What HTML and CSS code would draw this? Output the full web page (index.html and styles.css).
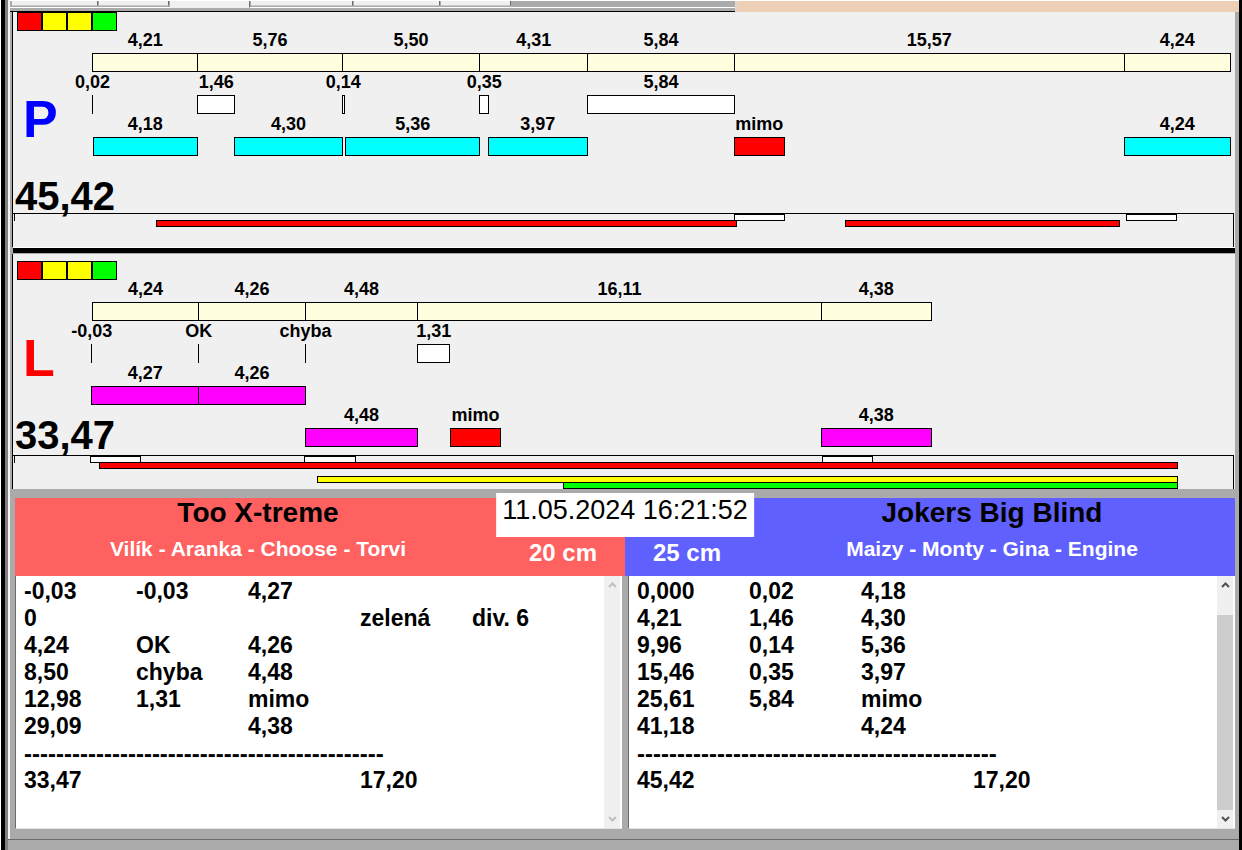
FILE: index.html
```html
<!doctype html>
<html lang="cs">
  <head>
    <meta charset="UTF-8" />
    <meta name="viewport" content="width=device-width, initial-scale=1.0" />
    <title>Too X-treme - Jokers Big Blind</title>
    <link rel="stylesheet" href="styles.css">
  </head>
  <body>
    <div class="window">
      <div class="client">
        <div class="topbar">
          <div class="tabs">
            <button class="tab tab-l" aria-label="1"></button>
            <button class="tab tab-s" aria-label="2"></button>
            <button class="tab tab-m active" aria-label="3"></button>
            <button class="tab tab-xl" aria-label="4"></button>
            <button class="tab tab-l" aria-label="5"></button>
            <button class="tab tab-s" aria-label="6"></button>
          </div>
          <div class="topbar-rest"></div>
        </div>

        <section class="panel panel-right">
          <div class="lights">
            <span class="light red"></span>
            <span class="light yellow"></span>
            <span class="light yellow"></span>
            <span class="light green"></span>
          </div>
          <div class="panel-body">
            <div class="side">
              <div class="letter blue-text">P</div>
              <div class="total">45,42</div>
            </div>
            <div class="chart">
              <div class="lane">
                <div class="run" style="--at: 0; --len: 4.21"><span>4,21</span><i class="bar cream"></i></div>
                <div class="run" style="--at: 4.21; --len: 5.76"><span>5,76</span><i class="bar cream"></i></div>
                <div class="run" style="--at: 9.96; --len: 5.5"><span>5,50</span><i class="bar cream"></i></div>
                <div class="run" style="--at: 15.46; --len: 4.31"><span>4,31</span><i class="bar cream"></i></div>
                <div class="run" style="--at: 19.77; --len: 5.84"><span>5,84</span><i class="bar cream"></i></div>
                <div class="run" style="--at: 25.61; --len: 15.57"><span>15,57</span><i class="bar cream"></i></div>
                <div class="run" style="--at: 41.18; --len: 4.24"><span>4,24</span><i class="bar cream"></i></div>
              </div>
              <div class="lane">
                <div class="run" style="--at: 0; --len: 0"><span>0,02</span><i class="bar line"></i></div>
                <div class="run" style="--at: 4.21; --len: 1.46"><span>1,46</span><i class="bar white"></i></div>
                <div class="run" style="--at: 9.96; --len: 0.1"><span>0,14</span><i class="bar white"></i></div>
                <div class="run" style="--at: 15.46; --len: 0.35"><span>0,35</span><i class="bar white"></i></div>
                <div class="run" style="--at: 19.77; --len: 5.84"><span>5,84</span><i class="bar white"></i></div>
              </div>
              <div class="lane">
                <div class="run" style="--at: 0.02; --len: 4.18"><span>4,18</span><i class="bar cyan"></i></div>
                <div class="run" style="--at: 5.67; --len: 4.3"><span>4,30</span><i class="bar cyan"></i></div>
                <div class="run" style="--at: 10.1; --len: 5.36"><span>5,36</span><i class="bar cyan"></i></div>
                <div class="run" style="--at: 15.81; --len: 3.93"><span>3,97</span><i class="bar cyan"></i></div>
                <div class="run" style="--at: 25.61; --len: 2"><span>mimo</span><i class="bar red"></i></div>
                <div class="run" style="--at: 41.18; --len: 4.24"><span>4,24</span><i class="bar cyan"></i></div>
              </div>
              <div class="lane"></div>
            </div>
          </div>
          <div class="sensors">
            <div class="sensor">
              <i class="mark white" style="--at: 25.61; --len: 2"></i>
              <i class="mark white" style="--at: 41.27; --len: 2"></i>
            </div>
            <div class="sensor">
              <i class="mark red" style="--at: 2.55; --len: 23.15"></i>
              <i class="mark red" style="--at: 30.05; --len: 10.94"></i>
            </div>
          </div>
        </section>

        <div class="divider"></div>

        <section class="panel panel-left">
          <div class="lights">
            <span class="light red"></span>
            <span class="light yellow"></span>
            <span class="light yellow"></span>
            <span class="light green"></span>
          </div>
          <div class="panel-body">
            <div class="side">
              <div class="letter red-text">L</div>
              <div class="total">33,47</div>
            </div>
            <div class="chart">
              <div class="lane">
                <div class="run" style="--at: 0; --len: 4.24"><span>4,24</span><i class="bar cream"></i></div>
                <div class="run" style="--at: 4.24; --len: 4.26"><span>4,26</span><i class="bar cream"></i></div>
                <div class="run" style="--at: 8.5; --len: 4.48"><span>4,48</span><i class="bar cream"></i></div>
                <div class="run" style="--at: 12.98; --len: 16.11"><span>16,11</span><i class="bar cream"></i></div>
                <div class="run" style="--at: 29.09; --len: 4.38"><span>4,38</span><i class="bar cream"></i></div>
              </div>
              <div class="lane">
                <div class="run" style="--at: -0.03; --len: 0"><span>-0,03</span><i class="bar line"></i></div>
                <div class="run" style="--at: 4.24; --len: 0"><span>OK</span><i class="bar line"></i></div>
                <div class="run" style="--at: 8.5; --len: 0"><span>chyba</span><i class="bar line"></i></div>
                <div class="run" style="--at: 12.98; --len: 1.28"><span>1,31</span><i class="bar white"></i></div>
              </div>
              <div class="lane">
                <div class="run" style="--at: -0.03; --len: 4.27"><span>4,27</span><i class="bar magenta"></i></div>
                <div class="run" style="--at: 4.24; --len: 4.26"><span>4,26</span><i class="bar magenta"></i></div>
              </div>
              <div class="lane">
                <div class="run" style="--at: 8.5; --len: 4.48"><span>4,48</span><i class="bar magenta"></i></div>
                <div class="run" style="--at: 14.29; --len: 2"><span>mimo</span><i class="bar red"></i></div>
                <div class="run" style="--at: 29.09; --len: 4.38"><span>4,38</span><i class="bar magenta"></i></div>
              </div>
            </div>
          </div>
          <div class="sensors">
            <div class="sensor">
              <i class="mark white" style="--at: -0.1; --len: 2"></i>
              <i class="mark white" style="--at: 8.48; --len: 2"></i>
              <i class="mark white" style="--at: 29.14; --len: 2"></i>
            </div>
            <div class="sensor">
              <i class="mark red" style="--at: 0.28; --len: 43.04"></i>
            </div>
            <div class="sensor"></div>
            <div class="sensor">
              <i class="mark yellow" style="--at: 8.98; --len: 34.34"></i>
            </div>
            <div class="sensor">
              <i class="mark green" style="--at: 18.8; --len: 24.52"></i>
            </div>
          </div>
        </section>

        <main class="results">
          <header class="teams">
            <div class="team team-red">
              <div class="team-info">
                <h2>Too X-treme</h2>
                <p>Vilík - Aranka - Choose - Torvi</p>
              </div>
              <div class="jump">20 cm</div>
            </div>
            <div class="team team-blue">
              <div class="jump">25 cm</div>
              <div class="team-info">
                <h2>Jokers Big Blind</h2>
                <p>Maizy - Monty - Gina - Engine</p>
              </div>
            </div>
            <time class="clock" datetime="2024-05-11T16:21:52">11.05.2024 16:21:52</time>
          </header>

          <div class="lists">
            <div class="list">
              <table>
                <tr><td>-0,03</td><td>-0,03</td><td>4,27</td><td></td><td></td></tr>
                <tr><td>0</td><td></td><td></td><td>zelená</td><td>div. 6</td></tr>
                <tr><td>4,24</td><td>OK</td><td>4,26</td><td></td><td></td></tr>
                <tr><td>8,50</td><td>chyba</td><td>4,48</td><td></td><td></td></tr>
                <tr><td>12,98</td><td>1,31</td><td>mimo</td><td></td><td></td></tr>
                <tr><td>29,09</td><td></td><td>4,38</td><td></td><td></td></tr>
                <tr><td class="rule" colspan="5">---------------------------------------------</td></tr>
                <tr><td>33,47</td><td></td><td></td><td>17,20</td><td></td></tr>
              </table>
              <div class="scrollbar">
                <button class="arrow" aria-label="Nahoru" disabled>
                  <svg width="9" height="6" viewBox="0 0 9 6"><path d="M1 5 4.5 1.5 8 5" /></svg>
                </button>
                <div class="track"></div>
                <button class="arrow" aria-label="Dolů" disabled>
                  <svg width="9" height="6" viewBox="0 0 9 6"><path d="M1 1 4.5 4.5 8 1" /></svg>
                </button>
              </div>
            </div>
            <div class="list">
              <table>
                <tr><td>0,000</td><td>0,02</td><td>4,18</td><td></td><td></td></tr>
                <tr><td>4,21</td><td>1,46</td><td>4,30</td><td></td><td></td></tr>
                <tr><td>9,96</td><td>0,14</td><td>5,36</td><td></td><td></td></tr>
                <tr><td>15,46</td><td>0,35</td><td>3,97</td><td></td><td></td></tr>
                <tr><td>25,61</td><td>5,84</td><td>mimo</td><td></td><td></td></tr>
                <tr><td>41,18</td><td></td><td>4,24</td><td></td><td></td></tr>
                <tr><td class="rule" colspan="5">---------------------------------------------</td></tr>
                <tr><td>45,42</td><td></td><td></td><td>17,20</td><td></td></tr>
              </table>
              <div class="scrollbar">
                <button class="arrow" aria-label="Nahoru">
                  <svg width="9" height="6" viewBox="0 0 9 6"><path d="M1 5 4.5 1.5 8 5" /></svg>
                </button>
                <div class="track"><div class="thumb"></div></div>
                <button class="arrow" aria-label="Dolů">
                  <svg width="9" height="6" viewBox="0 0 9 6"><path d="M1 1 4.5 4.5 8 1" /></svg>
                </button>
              </div>
            </div>
          </div>
        </main>
      </div>
      <footer class="status"></footer>
    </div>
  </body>
</html>
```
FILE: styles.css
```css
:root {
  --face: #f0f0f0;
  --frame: #aaaaaa;
  --shadow: #6b6b6b;
  --seconds: 45.42;
}

* {
  box-sizing: border-box;
}

body {
  margin: 0;
  background: #000;
  border-left: 1px solid #fff;
  font-family: "Liberation Sans", Arial, sans-serif;
  font-weight: bold;
  color: #000;
}

button {
  padding: 0;
  border: none;
}

.window {
  display: flex;
  flex-direction: column;
  min-height: 100vh;
  margin: 0 3px 0 4px;
  border-left: 3px solid #808080;
  background: var(--frame);
}

.client {
  flex: 1;
  display: flex;
  flex-direction: column;
  border-left: 2px solid #f6f6f6;
}

/* Tabs */
.topbar {
  display: grid;
  grid-template-columns: 59% 1fr;
  height: 12px;
  border-top: 1px solid #fff;
}

.tabs {
  display: flex;
  align-items: flex-start;
  gap: 1px;
  padding-left: 2px;
  border-bottom: 1px solid #000;
  background: linear-gradient(
    var(--frame) 6px,
    #fff 6px,
    #fff 7px,
    var(--frame) 7px
  );
}

.tab {
  height: 5px;
  background: var(--face);
  border-right: 1px solid var(--shadow);
  border-bottom: 1px solid #c8c8c8;
}

.tab-s {
  width: 70px;
}

.tab-m {
  width: 80px;
}

.tab-l {
  width: 86px;
}

.tab-xl {
  width: 102px;
}

.tab.active {
  height: 7px;
  border-bottom-color: var(--face);
}

.topbar-rest {
  background: #eccfb4;
  border-left: 4px solid #e6d3c3;
}

/* Timeline panels */
.panel {
  margin: 0 4px 0 2px;
  border-left: 1px solid #000;
  background: var(--face);
}

.panel-left {
  padding-top: 7px;
}

.lights {
  display: flex;
  margin-bottom: -1px;
  padding-left: 4px;
}

.light {
  width: 25px;
  height: 19px;
  border: 1px solid #000;
}

.panel-body {
  display: flex;
  padding-right: 5px;
}

.side {
  flex: none;
  width: 79px;
  display: flex;
  flex-direction: column;
  justify-content: flex-end;
  gap: 34px;
  padding-left: 2px;
}

.panel-left .side {
  padding-bottom: 3px;
}

.letter {
  padding-left: 8px;
  font-size: 52px;
  line-height: 52px;
}

.total {
  font-size: 40px;
  line-height: 34px;
  white-space: nowrap;
}

.chart {
  flex: 1;
  padding-bottom: 8px;
}

.panel-right .chart {
  padding-bottom: 15px;
}

.lane,
.sensor {
  display: grid;
  grid-template-columns: 100%;
}

.lane {
  height: 42px;
}

.run,
.mark {
  grid-area: 1 / 1;
  margin-left: calc(var(--at) / var(--seconds) * 100%);
  width: calc(var(--len) / var(--seconds) * 100% + 1px);
}

.run {
  display: flex;
  flex-direction: column;
  align-items: center;
  font-size: 18px;
  line-height: 20px;
  white-space: nowrap;
}

.bar {
  width: 100%;
  height: 19px;
  margin-top: 3px;
  border: 1px solid #000;
}

.bar.line {
  width: 1px;
  border-width: 0 0 0 1px;
}

.sensors {
  display: grid;
  grid-template-rows: 6px 6px 8px 6px 6px;
  height: 34px;
  margin-right: 1px;
  padding: 0 3px 0 79px;
  border-top: 1px solid #000;
  border-right: 1px solid #000;
  background: linear-gradient(#000, #000) 1px 0 / 1px 7px no-repeat;
}

.mark {
  height: 7px;
  border: 1px solid #000;
}

.divider {
  height: 7px;
  margin: 0 4px 0 3px;
  border-top: 1px solid #fff;
  border-bottom: 1px solid var(--frame);
  background: #000;
}

.red {
  background: #f00;
}

.yellow {
  background: #ff0;
}

.green {
  background: #0f0;
}

.cream {
  background: #ffffe0;
}

.white {
  background: #fff;
}

.cyan {
  background: #0ff;
}

.magenta {
  background: #f0f;
}

.blue-text {
  color: #00f;
}

.red-text {
  color: #f00;
}

/* Results */
.results {
  flex: 1;
  display: flex;
  flex-direction: column;
  margin: 9px 4px 10px 5px;
}

.teams {
  position: relative;
  display: grid;
  grid-template-columns: 1fr 1fr;
}

.team {
  display: flex;
  height: 78px;
}

.team-red {
  background: #ff6060;
}

.team-blue {
  background: #6060ff;
}

.team-info {
  flex: 1;
  text-align: center;
}

.team h2 {
  margin: 0;
  font-size: 28px;
  line-height: 30px;
}

.team p {
  margin: 9px 0 0;
  font-size: 21px;
  line-height: 24px;
  color: #fff;
}

.jump {
  width: 124px;
  padding-top: 41px;
  font-size: 24px;
  line-height: 27px;
  text-align: center;
  color: #fff;
}

.clock {
  position: absolute;
  top: -5px;
  left: 50%;
  transform: translateX(-50%);
  height: 44px;
  padding: 0 6px;
  background: #fff;
  font-size: 27px;
  font-weight: normal;
  line-height: 34px;
  white-space: nowrap;
}

.lists {
  flex: 1;
  display: grid;
  grid-template-columns: 1fr 1fr;
  gap: 6px;
}

.list {
  display: flex;
  justify-content: space-between;
  padding-right: 2px;
  border-left: 1px solid var(--shadow);
  border-bottom: 1px solid #e3e3e3;
  background: #fff;
}

.list table {
  align-self: flex-start;
  width: 568px;
  table-layout: fixed;
  border-spacing: 0;
  padding: 2px 0 0 8px;
  font-size: 23px;
  line-height: 27px;
}

.list td {
  height: 27px;
  padding: 0;
  white-space: nowrap;
}

.list .rule {
  font-size: 24px;
}

.scrollbar {
  flex: none;
  width: 16px;
  display: flex;
  flex-direction: column;
  background: var(--face);
}

.arrow {
  display: flex;
  align-items: center;
  justify-content: center;
  height: 18px;
  background: none;
}

.arrow path {
  fill: none;
  stroke: #505050;
  stroke-width: 2;
}

.arrow:disabled path {
  stroke: #bfbfbf;
}

.track {
  flex: 1;
  padding-top: 21px;
}

.thumb {
  height: 100%;
  background: #cdcdcd;
}

.status {
  height: 11px;
  border-top: 1px solid var(--shadow);
}
```
